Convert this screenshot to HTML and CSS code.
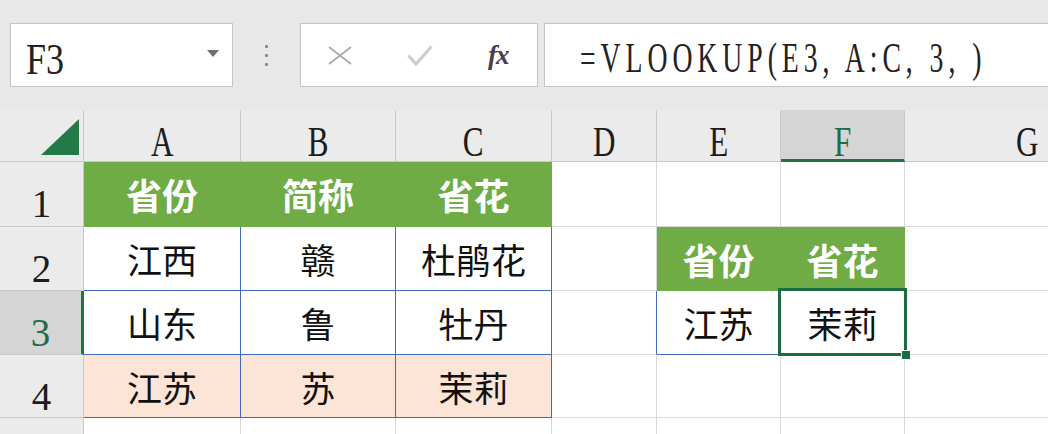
FILE: index.html
```html
<!DOCTYPE html>
<html lang="zh">
<head>
  <meta charset="UTF-8">
  <meta name="viewport" content="width=device-width, initial-scale=1.0">
  <title>VLOOKUP</title>
  <link rel="stylesheet" href="styles.css">
</head>
<body>
  <div class="toolbar">
    <div class="name-box">
      <span class="mono">F3</span>
      <span class="caret"></span>
    </div>
    <div class="grip"><i></i><i></i><i></i></div>
    <div class="fx-box">
      <svg class="ico-x" width="24" height="19" viewBox="0 0 24 19"><path d="M1 1 L23 18 M23 1 L1 18" stroke="#a8a8a8" stroke-width="1.6" fill="none"/></svg>
      <svg class="ico-ok" width="26" height="21" viewBox="0 0 26 21"><path d="M1.5 10.5 L9 19 L24.5 1.5" stroke="#cdcdcd" stroke-width="3.2" fill="none"/></svg>
      <span class="fx">fx</span>
    </div>
    <div class="formula"><span class="mono">=VLOOKUP(E3, A:C, 3, )</span></div>
  </div>

  <div class="sheet">
    <!-- column headers -->
    <div class="corner"><svg width="84" height="52" viewBox="0 0 84 52"><polygon points="41,45 79,9 79,45" fill="#237a47"/></svg></div>
    <div class="hd"><span class="mono">A</span></div>
    <div class="hd"><span class="mono">B</span></div>
    <div class="hd"><span class="mono">C</span></div>
    <div class="hd"><span class="mono">D</span></div>
    <div class="hd"><span class="mono">E</span></div>
    <div class="hd on"><span class="mono">F</span></div>
    <div class="hd"><span class="mono">G</span></div>

    <!-- row 1 -->
    <div class="rh"><span class="mono">1</span></div>
    <div class="c g">省份</div>
    <div class="c g">简称</div>
    <div class="c g">省花</div>
    <div class="c"></div>
    <div class="c"></div>
    <div class="c"></div>
    <div class="c"></div>

    <!-- row 2 -->
    <div class="rh"><span class="mono">2</span></div>
    <div class="c bl">江西</div>
    <div class="c bl">赣</div>
    <div class="c bl">杜鹃花</div>
    <div class="c"></div>
    <div class="c g">省份</div>
    <div class="c g">省花</div>
    <div class="c"></div>

    <!-- row 3 -->
    <div class="rh on"><span class="mono">3</span></div>
    <div class="c bl">山东</div>
    <div class="c bl">鲁</div>
    <div class="c bl">牡丹</div>
    <div class="c bl-r"></div>
    <div class="c bl">江苏</div>
    <div class="c sel">茉莉</div>
    <div class="c"></div>

    <!-- row 4 -->
    <div class="rh"><span class="mono">4</span></div>
    <div class="c bl pk">江苏</div>
    <div class="c bl pk">苏</div>
    <div class="c bl pk">茉莉</div>
    <div class="c"></div>
    <div class="c"></div>
    <div class="c"></div>
    <div class="c"></div>

    <!-- row 5 -->
    <div class="rh"></div>
    <div class="c"></div>
    <div class="c"></div>
    <div class="c"></div>
    <div class="c"></div>
    <div class="c"></div>
    <div class="c"></div>
    <div class="c"></div>
  </div>
</body>
</html>
```

FILE: styles.css
```css
body {
  margin: 0;
  width: 1048px;
  height: 434px;
  overflow: hidden;
  background: #ffffff;
  font-family: "Noto Sans CJK SC", sans-serif;
}

/* narrow serif, like the sheet's Latin glyphs */
.mono {
  font-family: "Liberation Serif", serif;
  font-size: 42px;
  line-height: 30px;
  display: inline-block;
  white-space: pre;
  transform: scaleX(0.74);
}

.toolbar {
  height: 110px;
  background: #e8e8e8;
  display: flex;
  align-items: flex-start;
  padding-top: 23px;
  box-sizing: border-box;
}
.name-box,
.fx-box,
.formula {
  flex: none;
  height: 64px;
  background: #fff;
  border: 1px solid #c4c4c4;
  box-sizing: border-box;
  display: flex;
  align-items: flex-start;
}
.name-box {
  margin-left: 10px;
  width: 223px;
  padding-left: 15px;
}
.name-box .mono,
.formula .mono {
  transform-origin: left center;
  color: #222;
}
.name-box .mono {
  margin-top: 20px;
  font-size: 45px;
  transform: scaleX(0.8);
}
.formula .mono {
  margin-top: 19px;
  letter-spacing: 7.5px;
  transform: scaleX(0.66);
}
.caret {
  margin-left: auto;
  margin-right: 13px;
  margin-top: 26px;
  border-left: 6px solid transparent;
  border-right: 6px solid transparent;
  border-top: 7px solid #6e6e6e;
}

.grip {
  flex: none;
  width: 67px;
  height: 64px;
  display: flex;
  flex-direction: column;
  align-items: center;
  justify-content: center;
  gap: 6px;
}
.grip i {
  width: 3px;
  height: 3px;
  background: #8a8a8a;
  border-radius: 1px;
}

.fx-box {
  width: 238px;
  align-items: center;
  padding-left: 27px;
}
.ico-ok {
  margin-left: 55px;
}
.fx {
  margin-left: 55px;
  font-family: "Liberation Serif", serif;
  font-style: italic;
  font-weight: bold;
  font-size: 27px;
  letter-spacing: -1px;
  color: #4a3d52;
  line-height: 1;
}

.formula {
  margin-left: 6px;
  width: 560px;
  padding-left: 35px;
}

/* grid */
.sheet {
  display: grid;
  grid-template-columns: 84px 157px 155px 156px 105px 124px 124px 246px;
  grid-template-rows: 52px 65px 64px 64px 63px 40px;
  width: 1151px;
}
.sheet > div {
  box-sizing: border-box;
  border-right: 1px solid #d9d9d9;
  border-bottom: 1px solid #d9d9d9;
}

.corner,
.hd,
.rh {
  background: #ebebeb;
  color: #1c1c1c;
}
.sheet > .corner,
.sheet > .hd,
.sheet > .rh {
  border-color: #c9c9c9;
}
.hd {
  display: flex;
  justify-content: center;
  align-items: flex-start;
  padding-top: 17px;
}
.rh {
  display: flex;
  justify-content: center;
  align-items: flex-start;
  padding-top: 27px;
}
.rh .mono {
  font-size: 39px;
  transform: none;
}
.sheet > .hd.on {
  background: #d5d5d5;
  color: #1f6b4a;
  border-bottom: 3px solid #217346;
}
.sheet > .rh.on {
  background: #d5d5d5;
  color: #1f6b4a;
  border-right: 3px solid #217346;
}

.c {
  display: flex;
  align-items: center;
  justify-content: center;
  font-size: 35px;
  line-height: 1;
  color: #111;
}
.sheet > .g {
  background: #6fac46;
  border-color: #6fac46;
  color: #fff;
  font-weight: bold;
  font-size: 36px;
}
.sheet > .bl {
  border-color: #4169bd;
}
.sheet > .bl-r {
  border-right-color: #4169bd;
}
.pk {
  background: #fce4d6;
}

.sel {
  position: relative;
  z-index: 2;
}
.sel::after {
  content: "";
  position: absolute;
  left: -3px;
  top: -3px;
  right: -3px;
  bottom: -2px;
  border: 3px solid #1e6b41;
}
.sel::before {
  content: "";
  position: absolute;
  right: -7px;
  bottom: -6px;
  width: 8px;
  height: 8px;
  background: #1e6b41;
  border: 1px solid #fff;
  z-index: 1;
}
```
